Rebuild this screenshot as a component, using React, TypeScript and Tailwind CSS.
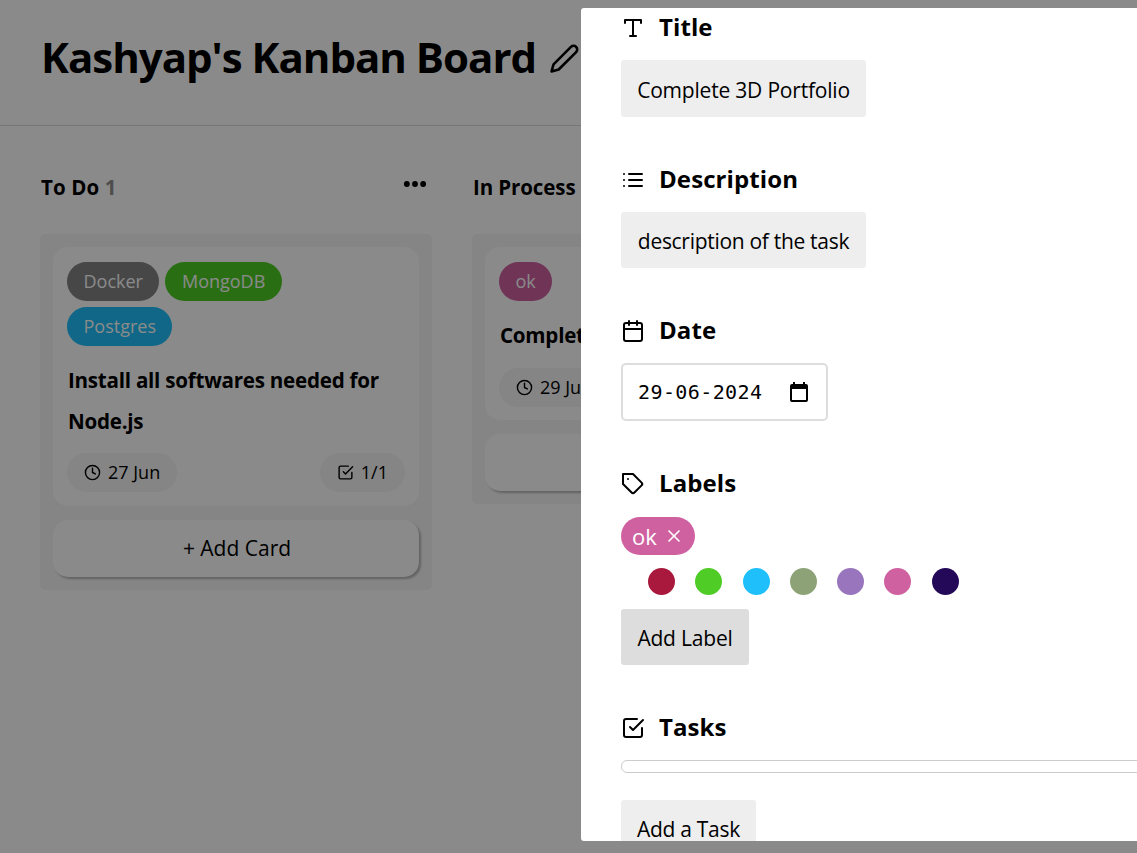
import { FiCalendar, FiCheckSquare, FiClock, FiEdit2, FiList, FiMoreHorizontal, FiTag, FiType, FiX } from 'react-icons/fi'

const swatches = ['bg-[#a8193d]', 'bg-[#4fcc25]', 'bg-[#1ebffa]', 'bg-[#8da377]', 'bg-[#9975bd]', 'bg-[#cf61a1]', 'bg-[#240959]']

function Tag({ text, color }: { text: string; color: string }) {
  return <span className={`rounded-[20px] px-[16.5px] h-[39px] flex items-center text-[18px] text-white ${color}`}>{text}</span>
}

function Chip({ children }: { children: React.ReactNode }) {
  return <span className="flex items-center gap-[7px] h-[39px] px-[17px] rounded-[20px] bg-[#f5f5f5] text-[18px]">{children}</span>
}

function Heading({ icon, text }: { icon: React.ReactNode; text: string }) {
  return (
    <div className="flex items-center gap-[14px] h-[33px] text-[24px] font-bold tracking-[0.1px]">
      <span className="w-6 flex justify-center text-[24px]">{icon}</span>
      <span className="mb-[2px]">{text}</span>
    </div>
  )
}

function AddCard() {
  return (
    <button className="w-full h-[57px] pl-[2px] bg-white rounded-[15px] shadow-[2px_2px_2px_0px_rgba(0,0,0,0.25)] text-[21px]">
      + Add Card
    </button>
  )
}

export default function App() {
  return (
    <div className="relative h-[853px] overflow-hidden bg-white font-['Open_Sans',sans-serif] text-black">
      <header className="h-[126px] border-b border-[#dcdcdc] pl-[41px] flex items-center gap-[13px]">
        <h1 className="text-[42px] font-bold tracking-[-1px] pb-[12px]">Kashyap's Kanban Board</h1>
        <FiEdit2 className="text-[31px] mb-[8px]" />
      </header>

      <main className="flex gap-10 pl-10">
        <section className="w-[392px] shrink-0">
          <div className="h-[108px] flex items-start justify-between pr-[3px] pl-[1px] pt-[46px]">
            <span className="text-[20.5px] font-bold tracking-[0.1px]">To Do <span className="text-[#8f8f8f]">1</span></span>
            <FiMoreHorizontal className="text-[28px] stroke-[3] fill-current -mt-[2px]" />
          </div>
          <div className="bg-[#f5f5f5] rounded-[5px] p-[13px] flex flex-col gap-[14px]">
            <div className="bg-white rounded-[15px] px-[14px] pt-[15px] pb-[14px]">
              <div className="flex flex-wrap gap-x-[6px] gap-y-[6px] max-w-[300px]">
                <Tag text="Docker" color="bg-[#848484]" />
                <Tag text="MongoDB" color="bg-[#4fcc25]" />
                <Tag text="Postgres" color="bg-[#1ebffa]" />
              </div>
              <h3 className="mt-[14px] pl-[1px] text-[20.6px] font-bold leading-[41px] tracking-[-0.25px]">
                Install all softwares needed for Node.js
              </h3>
              <div className="mt-[11px] flex justify-between">
                <Chip><FiClock className="text-[17px]" />27 Jun</Chip>
                <Chip><FiCheckSquare className="text-[17px]" />1/1</Chip>
              </div>
            </div>
            <AddCard />
          </div>
        </section>

        <section className="w-[392px] shrink-0">
          <div className="h-[108px] flex items-start pl-[1px] pt-[46px]">
            <span className="text-[20.5px] font-bold tracking-[-0.1px]">In Process</span>
          </div>
          <div className="bg-[#f5f5f5] rounded-[5px] p-[13px] flex flex-col gap-[14px]">
            <div className="bg-white rounded-[15px] px-[14px] pt-[15px] pb-[13px]">
              <div className="flex">
                <Tag text="ok" color="bg-[#cf61a1]" />
              </div>
              <h3 className="mt-[14px] pl-[1px] text-[20.6px] font-bold leading-[41px] tracking-[-0.25px]">Complete 3D Portfolio</h3>
              <div className="mt-[12px] flex">
                <Chip><FiClock className="text-[17px]" />29 Jun</Chip>
              </div>
            </div>
            <AddCard />
          </div>
        </section>
      </main>

      <div className="absolute inset-0 bg-black/46" />

      <aside className="absolute left-[581px] top-2 h-[833px] w-[640px] overflow-hidden rounded-[3px] bg-white pl-10 pt-[3px]">
        <div className="flex flex-col gap-[46px]">
          <div className="flex flex-col gap-4">
            <Heading icon={<FiType />} text="Title" />
            <div className="w-[245px] h-[57px] pt-[5px] bg-[#eeeeee] rounded-[3px] flex items-center justify-center text-[21px] tracking-[-0.2px]">Complete 3D Portfolio</div>
          </div>

          <div className="flex flex-col gap-4">
            <Heading icon={<FiList />} text="Description" />
            <div className="w-[245px] h-[56px] pt-[4px] bg-[#eeeeee] rounded-[3px] flex items-center justify-center text-[21px] tracking-[-0.3px] whitespace-nowrap">description of the task</div>
          </div>

          <div className="flex flex-col gap-4">
            <Heading icon={<FiCalendar />} text="Date" />
            <div className="w-[207px] h-[58px] border-2 border-[#dddddd] rounded-[5px] flex items-center justify-between pl-[15px] pr-[15px] font-['DejaVu_Sans_Mono',monospace] text-[20px] tracking-[0.4px]">
              29-06-2024
              <svg viewBox="0 0 24 24" className="w-[24px] h-[24px]" fill="currentColor">
                <path d="M19 4h-1V2h-2v2H8V2H6v2H5a2 2 0 0 0-2 2v14a2 2 0 0 0 2 2h14a2 2 0 0 0 2-2V6a2 2 0 0 0-2-2zm0 16H5V9h14v11z" />
              </svg>
            </div>
          </div>

          <div className="flex flex-col">
            <Heading icon={<FiTag />} text="Labels" />
            <div className="mt-[17px] flex">
              <span className="flex items-center gap-[7px] h-[38px] px-[11px] rounded-[20px] bg-[#cf61a1] text-white text-[22px]">ok <FiX className="text-[20px]" /></span>
            </div>
            <div className="mt-[13px] flex gap-[20.3px] pl-[27px]">
              {swatches.map(color => (
                <span key={color} className={`w-[27px] h-[27px] rounded-full ${color}`} />
              ))}
            </div>
            <button className="mt-[14px] w-[128px] h-[56px] pt-[4px] bg-[#dddddd] rounded-[3px] text-[21px] tracking-[-0.2px]">Add Label</button>
          </div>

          <div className="flex flex-col">
            <Heading icon={<FiCheckSquare />} text="Tasks" />
            <div className="mt-4 h-[13px] border border-[#cccccc] rounded-[6px]" />
            <button className="mt-[27px] w-[135px] h-[56px] pt-[4px] bg-[#eeeeee] rounded-[3px] text-[21px] tracking-[-0.3px]">Add a Task</button>
          </div>
        </div>
      </aside>
    </div>
  )
}
